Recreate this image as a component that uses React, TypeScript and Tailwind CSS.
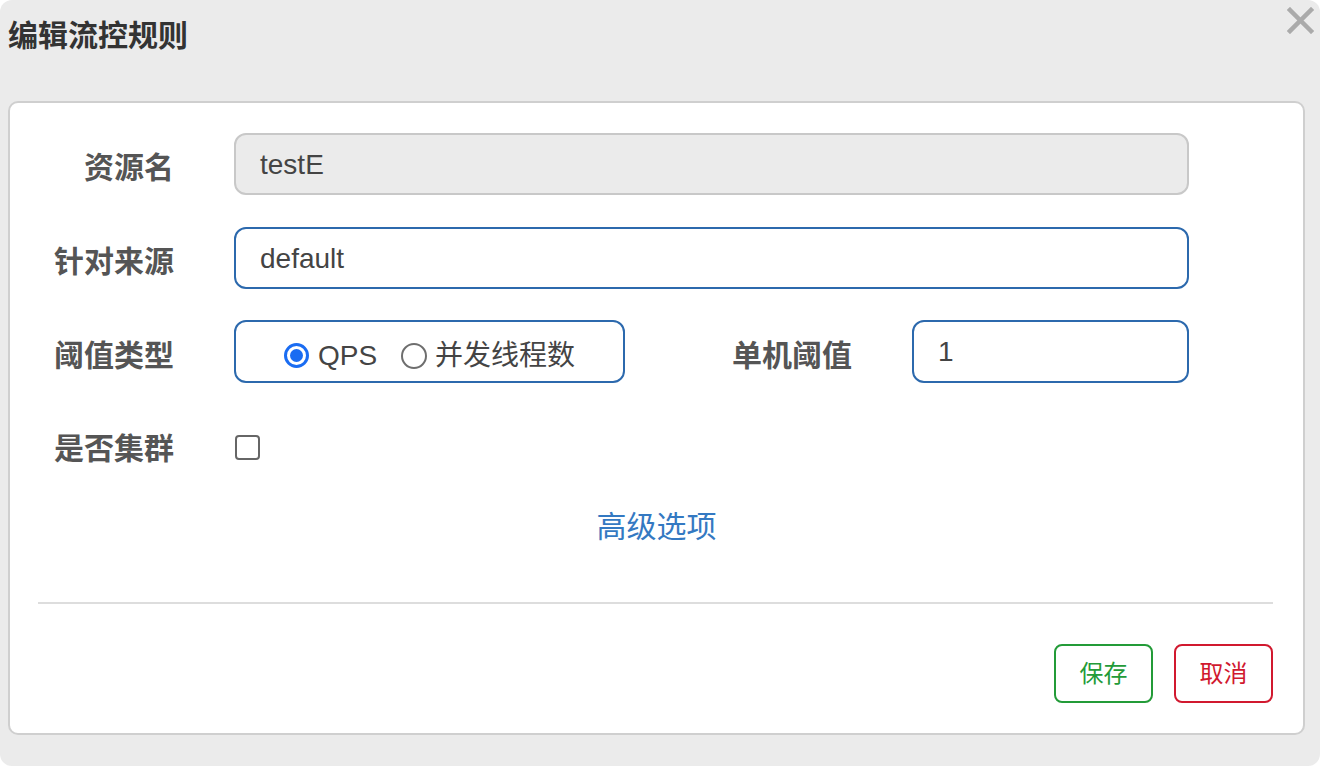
import React from "react";

const font = { fontFamily: '"Liberation Sans", "Noto Sans CJK SC", sans-serif' };

function Label({ children, className = "" }: { children: React.ReactNode; className?: string }) {
  return (
    <div className={"shrink-0 pt-[8px] text-right text-[30px] font-bold text-[#555555] leading-[42px] " + className}>
      {children}
    </div>
  );
}

function Radio({ checked }: { checked: boolean }) {
  return checked ? (
    <span className="flex h-[25px] w-[25px] shrink-0 items-center justify-center rounded-full border-[3px] border-[#1a6cf2] bg-white">
      <span className="block h-[13px] w-[13px] rounded-full bg-[#1a6cf2]" />
    </span>
  ) : (
    <span className="block h-[26px] w-[26px] shrink-0 rounded-full border-2 border-[#6e6e6e] bg-white" />
  );
}

export default function App() {
  return (
    <div className="h-[766px] w-[1320px] bg-white" style={font}>
      <div className="relative flex h-[766px] w-[1320px] flex-col rounded-xl bg-[#ebebeb]">
        <div className="h-[101px] pl-[8px] pt-[15px]">
          <h1 className="text-[30px] font-bold leading-[42px] text-[#333333]">编辑流控规则</h1>
        </div>
        <button className="absolute right-[6px] top-[7px] h-[27px] w-[27px]">
          <svg viewBox="0 0 27 27" className="h-[27px] w-[27px]">
            <path d="M3 3 L24 24 M24 3 L3 24" stroke="#aaaaaa" strokeWidth="4.5" strokeLinecap="square" />
          </svg>
        </button>

        <div className="ml-[8px] flex h-[634px] w-[1297px] flex-col rounded-[10px] border-2 border-[#cfcfcf] bg-white pt-[30px]">
          <div className="flex h-[62px] items-center">
            <Label className="w-[164px]">资源名</Label>
            <div className="ml-[60px] flex h-[62px] w-[955px] items-center rounded-[12px] border-2 border-[#c8c8c8] bg-[#ebebeb] pl-[24px] pt-[2px] text-[28px] text-[#444444]">
              testE
            </div>
          </div>

          <div className="mt-[32px] flex h-[62px] items-center">
            <Label className="w-[164px]">针对来源</Label>
            <div className="ml-[60px] flex h-[62px] w-[955px] items-center rounded-[12px] border-2 border-[#2c69ad] bg-white pl-[24px] pt-[2px] text-[28px] text-[#444444]">
              default
            </div>
          </div>

          <div className="mt-[31px] flex h-[63px] items-center">
            <Label className="w-[164px]">阈值类型</Label>
            <div className="ml-[60px] flex h-[63px] w-[391px] shrink-0 items-center justify-center rounded-[12px] border-2 border-[#2c69ad] bg-white pt-[8px] text-[28px] text-[#444444]">
              <Radio checked />
              <span className="ml-[9px]">QPS</span>
              <span className="ml-[24px]">
                <Radio checked={false} />
              </span>
              <span className="ml-[8px]">并发线程数</span>
            </div>
            <Label className="w-[227px]">单机阈值</Label>
            <div className="ml-[60px] flex h-[63px] w-[277px] items-center rounded-[12px] border-2 border-[#2c69ad] bg-white pl-[24px] text-[28px] text-[#444444]">
              1
            </div>
          </div>

          <div className="mt-[31px] flex h-[62px] items-center">
            <Label className="w-[164px]">是否集群</Label>
            <div className="ml-[61px] mt-[4px] h-[25px] w-[25px] rounded-[4px] border-2 border-[#666666] bg-white" />
          </div>

          <div className="mt-[30px] text-center text-[30px] leading-[42px] text-[#3479c2]">
            <span className="cursor-pointer">高级选项</span>
          </div>

          <div className="ml-[28px] mr-[30px] mt-[54px] h-[2px] bg-[#dddddd]" />

          <div className="mr-[30px] mt-[40px] flex justify-end gap-[21px]">
            <button className="h-[59px] w-[99px] rounded-[8px] border-2 border-[#239b38] bg-white text-[24px] text-[#239b38]">
              保存
            </button>
            <button className="h-[59px] w-[99px] rounded-[8px] border-2 border-[#d1192f] bg-white text-[24px] text-[#d1192f]">
              取消
            </button>
          </div>
        </div>
      </div>
    </div>
  );
}
